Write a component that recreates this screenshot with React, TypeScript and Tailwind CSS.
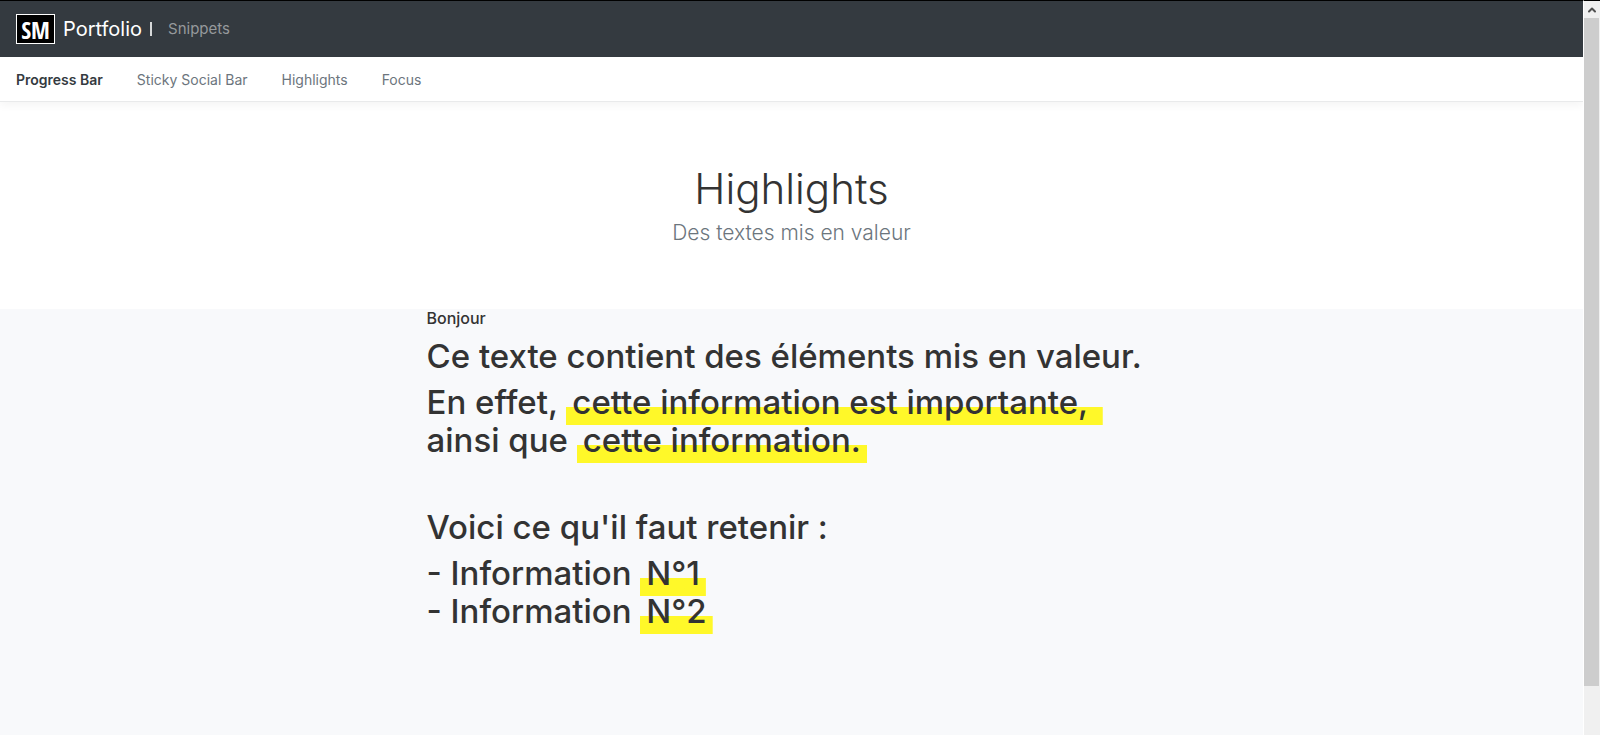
import React from 'react';
import { ChevronUp } from 'lucide-react';

const LINKS = [
  { label: 'Progress Bar', active: true },
  { label: 'Sticky Social Bar', active: false },
  { label: 'Highlights', active: false },
  { label: 'Focus', active: false },
];

const Mark: React.FC<{ children: React.ReactNode }> = ({ children }) => (
  <mark className="bg-transparent bg-linear-to-r from-[#fff829] to-[#fff829] bg-[length:100%_18px] bg-bottom bg-no-repeat px-1.5 pb-[3px] text-inherit">
    {children}
  </mark>
);

const Header: React.FC = () => (
  <header className="relative">
    <div className="flex h-[57px] items-center border-t border-black bg-[#343a40] px-4">
      <a href="#portfolio" className="flex items-center gap-2 text-xl text-white">
        <span className="flex h-[30px] w-[39px] items-center justify-center border border-white bg-black pt-0.5 font-['Open_Sans_Condensed','DejaVu_Sans_Condensed',sans-serif] text-2xl leading-none">
          SM
        </span>
        <span>Portfolio</span>
        <span className="h-[14px] w-0.5 bg-white/80" />
      </a>
      <a href="#snippets" className="ml-4 text-[15px] text-[#96999c]">Snippets</a>
    </div>
    <nav className="flex h-[45px] items-center gap-[34px] border-b border-[#e9eaeb] bg-white px-4 pt-0.5 text-sm text-[#6c757d] shadow-[0_4px_8px_rgba(0,0,0,0.04)]">
      {LINKS.map((link) => (
        <a
          key={link.label}
          href="#"
          className={link.active ? 'font-semibold text-[#343a40]' : 'hover:text-[#007bff]'}
        >
          {link.label}
        </a>
      ))}
    </nav>
  </header>
);

const Scrollbar: React.FC = () => (
  <div className="sticky top-0 flex h-screen w-[17px] shrink-0 flex-col border-t border-l border-t-black border-l-white bg-[#f0f0f0] pr-px">
    <button aria-label="Scroll up" className="flex h-[17px] shrink-0 items-center justify-center text-[#505050]">
      <ChevronUp className="h-3 w-3" strokeWidth={4} />
    </button>
    <div className="h-[91%] bg-[#cdcdcd]" />
  </div>
);

export default function App() {
  return (
    <div className="flex min-h-screen bg-[#f8f9fb] font-['Inter',sans-serif] text-[#333333]">
      <div className="min-w-0 flex-1">
        <Header />
        <section className="bg-white px-4 pt-[62px] pb-[62px] text-center">
          <h1 className="text-[42px] leading-[50px] font-light">Highlights</h1>
          <p className="mt-1 text-[21px] leading-[29px] font-light text-[#6c757d]">Des textes mis en valeur</p>
        </section>
        <main className="mx-auto max-w-[730px] text-[33px] leading-[38px] font-medium">
          <p className="mb-[9px] text-base leading-[19px]">Bonjour</p>
          <h2 className="mb-2">Ce texte contient des éléments mis en valeur.</h2>
          <h2 className="mb-[49px]">
            En effet, <Mark>cette information est importante,&nbsp;</Mark>
            <br />
            ainsi que <Mark>cette information.</Mark>
          </h2>
          <h2 className="mb-2">Voici ce qu'il faut retenir :</h2>
          <h2>
            - Information <Mark>N°1</Mark>
            <br />
            - Information <Mark>N°2</Mark>
          </h2>
        </main>
      </div>
      <Scrollbar />
    </div>
  );
}
